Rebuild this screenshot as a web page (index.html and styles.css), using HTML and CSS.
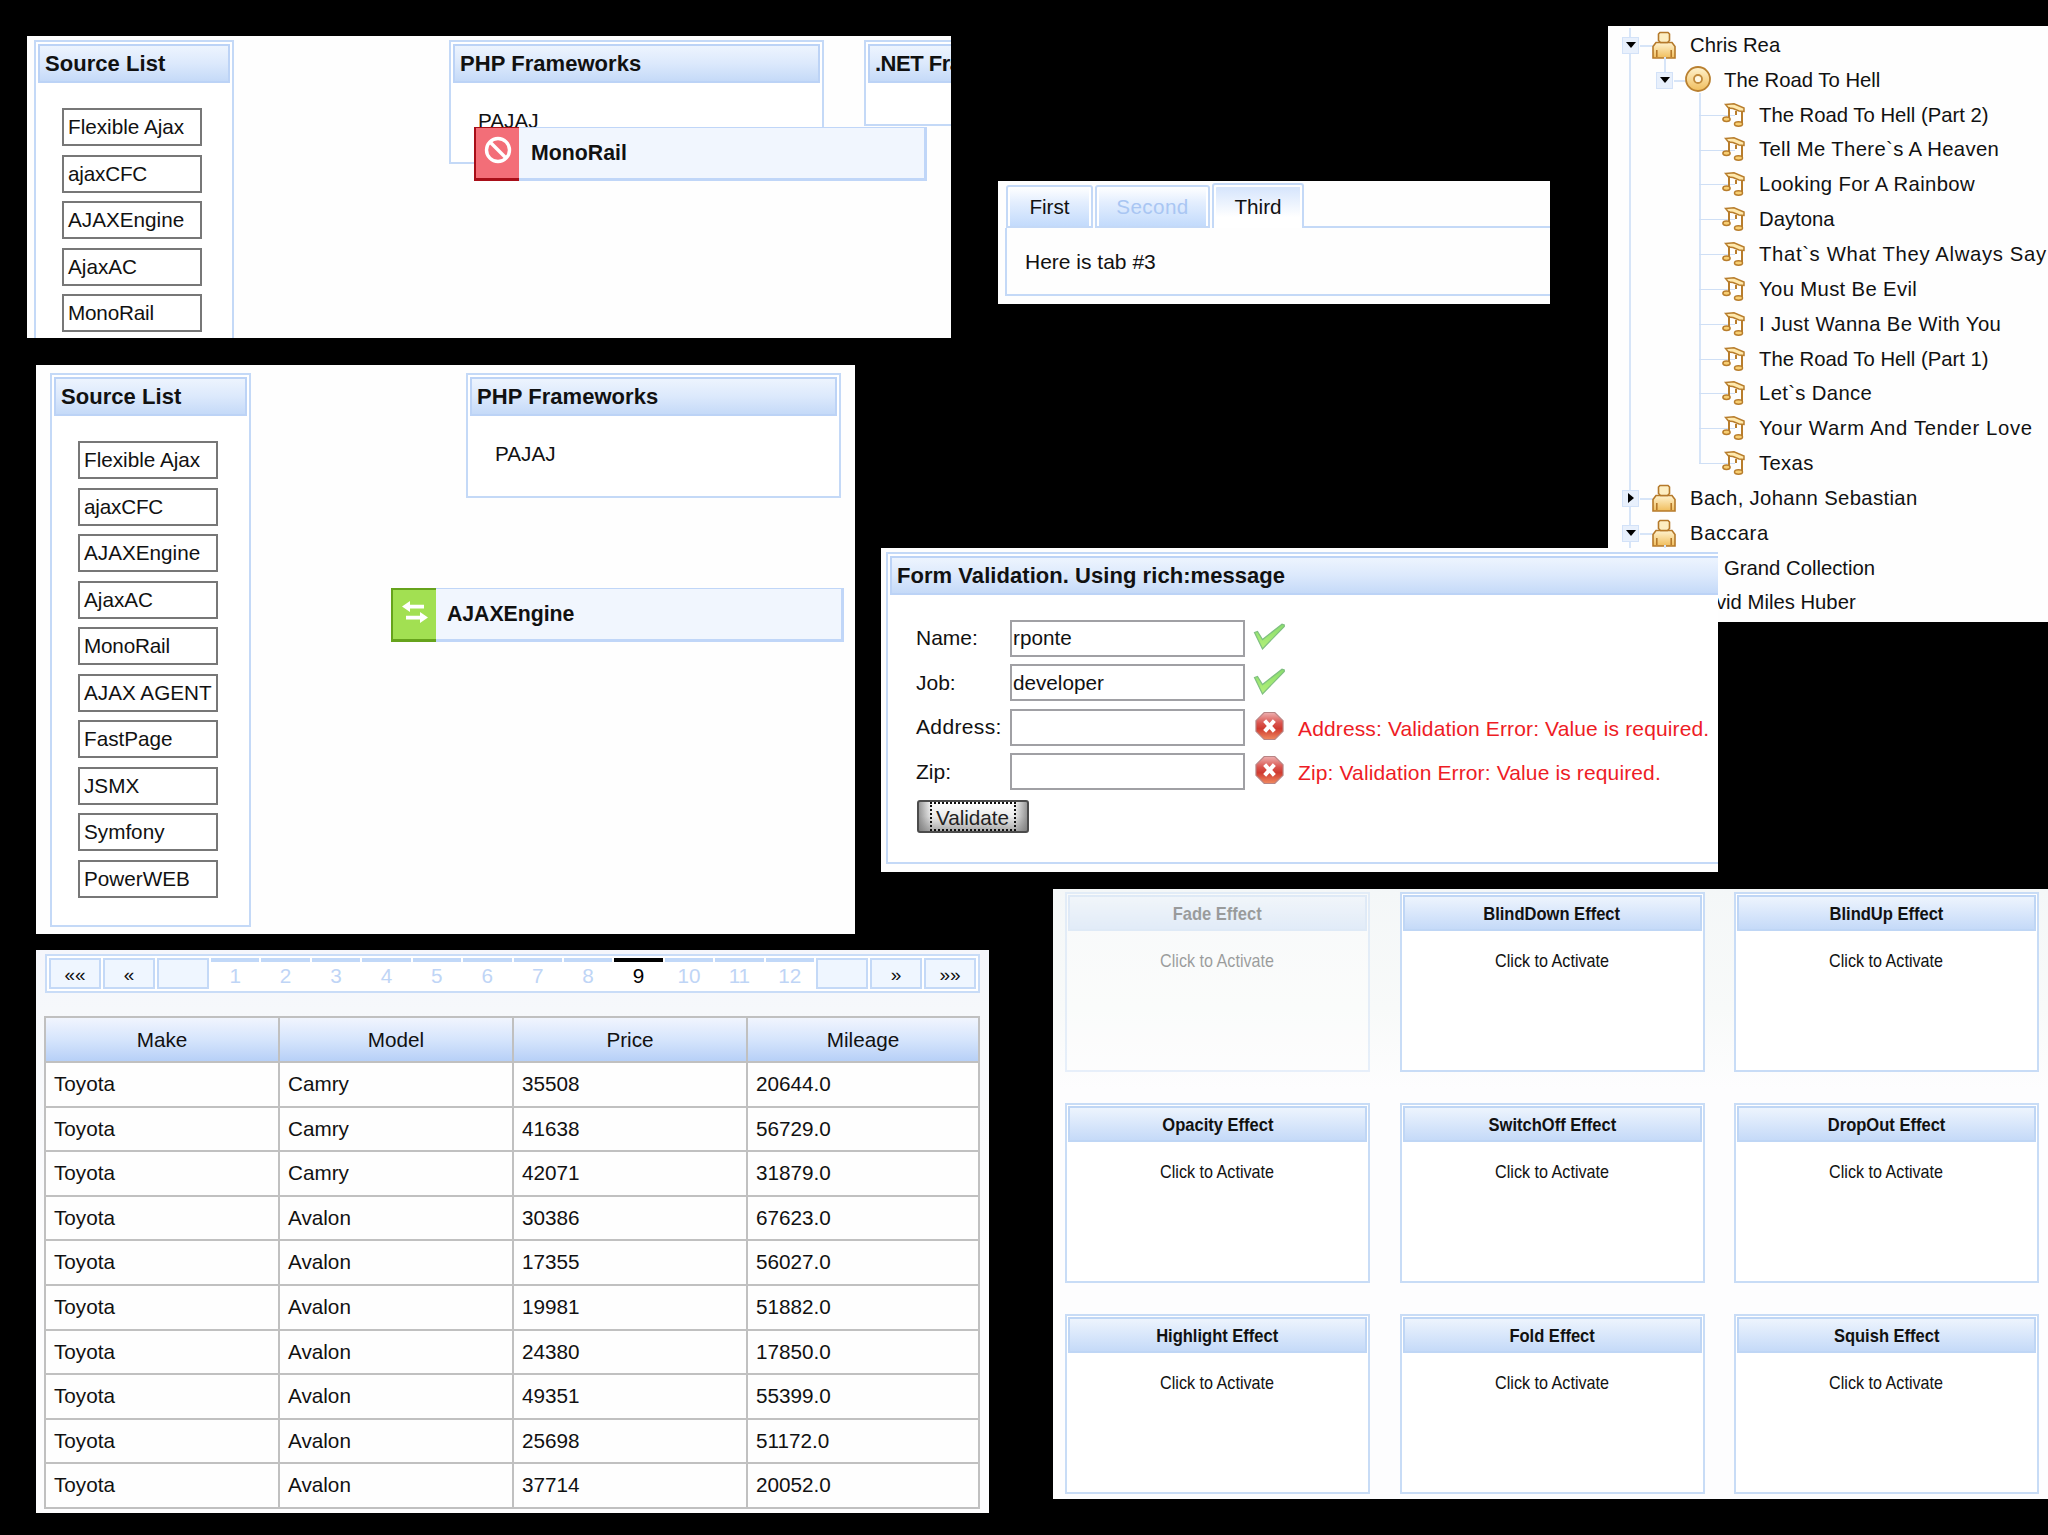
FILE: index.html
```html
<!DOCTYPE html>
<html lang="en">
<head>
<meta charset="UTF-8" />
<meta name="viewport" content="width=device-width, initial-scale=1" />
<title>RichFaces components</title>
<link rel="stylesheet" href="styles.css">
</head>
<body>

<!-- Icons -->
<svg class="defs" width="0" height="0">
<defs>
<linearGradient id="gold" x1="0" y1="0" x2="0" y2="1"><stop offset="0" stop-color="#fff3cf"/><stop offset="1" stop-color="#f0bd5c"/></linearGradient>
<linearGradient id="green" x1="0" y1="0" x2="0" y2="1"><stop offset="0" stop-color="#8ade6c"/><stop offset="1" stop-color="#b4f07a"/></linearGradient>
<linearGradient id="red" x1="0" y1="0" x2="0" y2="1"><stop offset="0" stop-color="#eeb0b0"/><stop offset=".4" stop-color="#d9534d"/><stop offset=".6" stop-color="#cf3a30"/><stop offset="1" stop-color="#f08a60"/></linearGradient>
<symbol id="person" viewBox="0 0 24 28">
<path d="M4 11.500h16l3 4v11.500H1v-11.500z" fill="url(#gold)" stroke="#b5792a" stroke-width="1.600"/>
<path d="M8 1.500h8l1.500 1.500v6.500l-2 2h-7l-2-2V3z" fill="#fdeec2" stroke="#b5792a" stroke-width="1.600"/>
<path d="M4.800 19v7M19.200 19v7" stroke="#b5792a" stroke-width="1.600"/>
</symbol>
<symbol id="disc" viewBox="0 0 26 26">
<circle cx="13" cy="13" r="12" fill="url(#gold)" stroke="#b98030" stroke-width="1.800"/>
<circle cx="13" cy="13" r="4" fill="#fff8e4" stroke="#c08a3c" stroke-width="1.800"/>
</symbol>
<symbol id="note" viewBox="0 0 24 25">
<path d="M3.500 2.500L12 1.800L22 6v3.500L17 9L11 6.500L6.500 6z" fill="#ffe9ad" stroke="#b87d2c" stroke-width="1.500"/>
<path d="M7 5v12M20 9v13M14 9v4" stroke="#b87d2c" stroke-width="2"/>
<ellipse cx="4.500" cy="17.300" rx="3.600" ry="2.200" fill="#f8cf73" stroke="#b87d2c" stroke-width="1.500"/>
<ellipse cx="16.500" cy="22" rx="4" ry="2.200" fill="#f8cf73" stroke="#b87d2c" stroke-width="1.500"/>
</symbol>
<symbol id="check" viewBox="0 0 32 27">
<path d="M1.500 9.500l3-1 5 8L29 1.200l2.300.8v1.500L9.500 26z" fill="url(#green)" stroke="#7fbf80" stroke-width="1.200"/>
</symbol>
<symbol id="error" viewBox="0 0 30 30">
<path d="M9.500 1h11L29 9.500v11L20.500 29h-11L1 20.500v-11z" fill="url(#red)" stroke="#b88484" stroke-width="1.200"/>
<path d="M10 9.500l10 11M20 9.500l-10 11" stroke="#fff" stroke-width="4.200"/>
</symbol>
</defs>
</svg>

<!-- Drag and drop, rejected -->
<div class="shot shot-reject">
<div class="panel source">
<div class="panel-header">Source List</div>
<div class="items">
<div class="item">Flexible Ajax</div>
<div class="item narrow">ajaxCFC</div>
<div class="item">AJAXEngine</div>
<div class="item">AjaxAC</div>
<div class="item narrow">MonoRail</div>
</div>
</div>
<div class="panel php">
<div class="panel-header">PHP Frameworks</div>
<div class="dropped">PAJAJ</div>
</div>
<div class="panel net">
<div class="panel-header">.NET Frameworks</div>
</div>
<div class="drag reject">
<div class="drag-icon"><svg width="28" height="28" viewBox="0 0 28 28" fill="none" stroke="#fff" stroke-width="3.400"><circle cx="14" cy="14" r="11.500"/><path d="M6 6l16 16"/></svg></div>
<div class="drag-text">MonoRail</div>
</div>
</div>

<!-- Drag and drop, default -->
<div class="shot shot-drag">
<div class="panel source">
<div class="panel-header">Source List</div>
<div class="items">
<div class="item">Flexible Ajax</div>
<div class="item narrow">ajaxCFC</div>
<div class="item">AJAXEngine</div>
<div class="item">AjaxAC</div>
<div class="item narrow">MonoRail</div>
<div class="item">AJAX AGENT</div>
<div class="item">FastPage</div>
<div class="item">JSMX</div>
<div class="item">Symfony</div>
<div class="item">PowerWEB</div>
</div>
</div>
<div class="panel php">
<div class="panel-header">PHP Frameworks</div>
<div class="dropped">PAJAJ</div>
</div>
<div class="drag accept">
<div class="drag-icon"><svg width="28" height="24" viewBox="0 0 28 24" fill="#fff"><path d="M1 6.500L9 1v3.800h14v3.600H9V12z"/><path d="M27 17.500L19 12v3.800H5v3.600h14V23z"/></svg></div>
<div class="drag-text">AJAXEngine</div>
</div>
</div>

<!-- Tab panel -->
<div class="shot shot-tabs">
<div class="tabs">
<div class="tab first">First</div>
<div class="tab second">Second</div>
<div class="tab third">Third</div>
</div>
<div class="tab-body">Here is tab #3</div>
</div>

<!-- Tree -->
<div class="shot shot-tree">
<ul class="tree">
<li class="artist open"><div class="node"><i class="toggle"></i><svg class="person"><use href="#person"/></svg><span>Chris Rea</span></div>
<ul>
<li class="album open"><div class="node"><i class="toggle"></i><svg class="disc"><use href="#disc"/></svg><span>The Road To Hell</span></div>
<ul class="songs">
<li><svg class="note"><use href="#note"/></svg><span>The Road To Hell (Part 2)</span></li>
<li class="loose"><svg class="note"><use href="#note"/></svg><span>Tell Me There`s A Heaven</span></li>
<li class="loose"><svg class="note"><use href="#note"/></svg><span>Looking For A Rainbow</span></li>
<li><svg class="note"><use href="#note"/></svg><span>Daytona</span></li>
<li class="looser"><svg class="note"><use href="#note"/></svg><span>That`s What They Always Say</span></li>
<li class="loose"><svg class="note"><use href="#note"/></svg><span>You Must Be Evil</span></li>
<li class="loose"><svg class="note"><use href="#note"/></svg><span>I Just Wanna Be With You</span></li>
<li><svg class="note"><use href="#note"/></svg><span>The Road To Hell (Part 1)</span></li>
<li class="loose"><svg class="note"><use href="#note"/></svg><span>Let`s Dance</span></li>
<li class="looser"><svg class="note"><use href="#note"/></svg><span>Your Warm And Tender Love</span></li>
<li class="loose"><svg class="note"><use href="#note"/></svg><span>Texas</span></li>
</ul>
</li>
</ul>
</li>
<li class="artist loose"><div class="node"><i class="toggle closed"></i><svg class="person"><use href="#person"/></svg><span>Bach, Johann Sebastian</span></div></li>
<li class="artist"><div class="node looser"><i class="toggle"></i><svg class="person"><use href="#person"/></svg><span>Baccara</span></div>
<ul>
<li class="album"><div class="node"><i class="toggle closed"></i><svg class="disc"><use href="#disc"/></svg><span>Grand Collection</span></div></li>
</ul>
</li>
<li class="artist"><div class="node"><i class="toggle closed"></i><svg class="person"><use href="#person"/></svg><span>David Miles Huber</span></div></li>
</ul>
</div>

<!-- Form validation -->
<div class="shot shot-form">
<div class="panel form-panel">
<div class="panel-header">Form Validation. Using rich:message</div>
<form class="form">
<label for="name">Name:</label><input id="name" type="text" value="rponte"><svg class="check"><use href="#check"/></svg><span></span>
<label for="job">Job:</label><input id="job" type="text" value="developer"><svg class="check"><use href="#check"/></svg><span></span>
<label for="address" class="loose">Address:</label><input id="address" type="text"><svg class="error"><use href="#error"/></svg><span class="message">Address: Validation Error: Value is required.</span>
<label for="zip">Zip:</label><input id="zip" type="text"><svg class="error"><use href="#error"/></svg><span class="message">Zip: Validation Error: Value is required.</span>
</form>
<button class="validate" type="button"><span>Validate</span></button>
</div>
</div>

<!-- Data table -->
<div class="shot shot-table">
<div class="scroller">
<div class="step">««</div><div class="step">«</div><div class="step"></div>
<div class="pages">
<div>1</div><div>2</div><div>3</div><div>4</div><div>5</div><div>6</div><div>7</div><div>8</div><div class="current">9</div><div>10</div><div>11</div><div>12</div>
</div>
<div class="step"></div><div class="step">»</div><div class="step">»»</div>
</div>
<div class="cars">
<b>Make</b><b>Model</b><b>Price</b><b>Mileage</b>
<div>Toyota</div><div>Camry</div><div>35508</div><div>20644.0</div>
<div>Toyota</div><div>Camry</div><div>41638</div><div>56729.0</div>
<div>Toyota</div><div>Camry</div><div>42071</div><div>31879.0</div>
<div>Toyota</div><div>Avalon</div><div>30386</div><div>67623.0</div>
<div>Toyota</div><div>Avalon</div><div>17355</div><div>56027.0</div>
<div>Toyota</div><div>Avalon</div><div>19981</div><div>51882.0</div>
<div>Toyota</div><div>Avalon</div><div>24380</div><div>17850.0</div>
<div>Toyota</div><div>Avalon</div><div>49351</div><div>55399.0</div>
<div>Toyota</div><div>Avalon</div><div>25698</div><div>51172.0</div>
<div>Toyota</div><div>Avalon</div><div>37714</div><div>20052.0</div>
</div>
</div>

<!-- Effects -->
<div class="shot shot-effects">
<div class="effect faded"><h3><span>Fade Effect</span></h3><p><span>Click to Activate</span></p></div>
<div class="effect"><h3><span>BlindDown Effect</span></h3><p><span>Click to Activate</span></p></div>
<div class="effect"><h3><span>BlindUp Effect</span></h3><p><span>Click to Activate</span></p></div>
<div class="effect"><h3><span>Opacity Effect</span></h3><p><span>Click to Activate</span></p></div>
<div class="effect"><h3><span>SwitchOff Effect</span></h3><p><span>Click to Activate</span></p></div>
<div class="effect"><h3><span>DropOut Effect</span></h3><p><span>Click to Activate</span></p></div>
<div class="effect"><h3><span>Highlight Effect</span></h3><p><span>Click to Activate</span></p></div>
<div class="effect"><h3><span>Fold Effect</span></h3><p><span>Click to Activate</span></p></div>
<div class="effect"><h3><span>Squish Effect</span></h3><p><span>Click to Activate</span></p></div>
</div>

</body>
</html>
```
FILE: styles.css
```css
* {
  box-sizing: border-box;
}
body {
  margin: 0;
  width: 2048px;
  height: 1535px;
  position: relative;
  overflow: hidden;
  background: #000;
  color: #111;
  font-family: "Liberation Sans", Arial, sans-serif;
  font-size: 20.7px;
}
.defs {
  position: absolute;
}
ul {
  list-style: none;
  margin: 0;
  padding: 0;
}

/* Windows on the black canvas */
.shot {
  position: absolute;
  overflow: hidden;
  background: #fefefe;
}
.shot-reject {
  left: 27px;
  top: 36px;
  width: 924px;
  height: 302px;
  display: flex;
  align-items: flex-start;
  padding: 4px 0 0 7px;
}
.shot-drag {
  left: 36px;
  top: 365px;
  width: 819px;
  height: 569px;
  display: flex;
  align-items: flex-start;
  padding: 8px 0 0 14px;
}
.shot-tabs {
  left: 998px;
  top: 181px;
  width: 552px;
  height: 123px;
  padding: 2px 0 0 7px;
}
.shot-tree {
  left: 1608px;
  top: 26px;
  width: 440px;
  height: 596px;
  padding-top: 2px;
}
.shot-form {
  left: 881px;
  top: 548px;
  width: 837px;
  height: 324px;
  padding: 4px 0 0 5px;
}
.shot-table {
  left: 36px;
  top: 950px;
  width: 953px;
  height: 563px;
  padding: 4px 8px 0;
  background: linear-gradient(#f5f6fb, #f6f8fb 60px, #fdfdfe 300px);
}
.shot-effects {
  left: 1053px;
  top: 889px;
  width: 995px;
  height: 610px;
  padding: 3px 0 0 12px;
  background: linear-gradient(#f4f7f8, #f8faf9 120px, #fdfdfe 200px);
  display: grid;
  grid-template-columns: repeat(3, 305px);
  grid-auto-rows: 180px;
  column-gap: 29.5px;
  row-gap: 31px;
}

/* Panels */
.panel {
  flex: none;
  border: 2px solid #c4d9f7;
  padding: 2px;
  background: #fff;
}
.panel-header {
  height: 39px;
  line-height: 35px;
  border: 2px solid #bcd3f6;
  padding-left: 5px;
  background: linear-gradient(#edf4fe, #dce9fc 50%, #c5daf8);
  font-size: 22px;
  font-weight: bold;
  letter-spacing: .05px;
  white-space: nowrap;
}
.source {
  width: 201px;
  height: 554px;
}
.shot-reject .source {
  width: 200px;
}
.items {
  display: flex;
  flex-direction: column;
  gap: 8.5px;
  padding: 25px 0 0 24px;
}
.item {
  width: 140px;
  height: 38px;
  line-height: 34px;
  border: 2px solid #777;
  padding-left: 4px;
  white-space: nowrap;
}
.item.narrow {
  letter-spacing: -.2px;
}
.php {
  width: 375px;
  height: 124px;
  margin-left: 215px;
}
.shot-drag .php {
  height: 125px;
}
.net {
  width: 300px;
  height: 86px;
  margin-left: 40px;
}
.net .panel-header {
  letter-spacing: -.5px;
}
.dropped {
  padding: 26px 0 0 25px;
  line-height: 24px;
  font-size: 20.7px;
}

/* Drag indicator */
.drag {
  position: absolute;
  width: 453px;
  height: 54px;
  display: flex;
  font-size: 21.3px;
  font-weight: bold;
}
.reject {
  left: 447px;
  top: 91px;
}
.accept {
  left: 355px;
  top: 223px;
}
.drag-icon {
  width: 45px;
  padding: 8px 0 0 8px;
}
.reject .drag-icon {
  background: #f36e78;
  border: 1px solid #a80e18;
  border-width: 1px 0 3px 2px;
}
.accept .drag-icon {
  background: #a2e052;
  border: 2px solid #66a31c;
  border-width: 2px 0 3px 2px;
  padding-top: 10px;
}
.drag-text {
  flex: 1;
  padding-left: 12px;
  line-height: 51px;
  background: #f1f6fe;
  border: 2px solid #c0d6f8;
  border-width: 1px 3px 3px 0;
}
.accept .drag-text {
  padding-left: 11px;
  letter-spacing: -.05px;
}

/* Tabs */
.tabs {
  display: flex;
  align-items: flex-end;
  height: 45px;
  gap: 2px;
  position: relative;
  padding-left: 1px;
}
.tabs::after {
  content: "";
  flex: 1;
  border-bottom: 2px solid #c4d9f7;
  margin-left: -2px;
}
.tab {
  height: 43px;
  line-height: 40px;
  border: 2px solid #c4d9f7;
  border-radius: 3px 3px 0 0;
  text-align: center;
  background: linear-gradient(#fff, #e3eefe 40%, #c3dbfc);
  box-shadow: inset 2px 0 #fff, inset -2px 0 #fff;
}
.first {
  width: 87px;
}
.second {
  width: 115px;
  color: #a9c6f3;
  letter-spacing: .4px;
}
.third {
  width: 92px;
  height: 45px;
  line-height: 43px;
  border-bottom: 0;
  background: linear-gradient(#d3e3fc, #fff 75%);
  box-shadow: inset 2px 2px #fff, inset -2px 0 #fff;
}
.tab-body {
  height: 68px;
  border: 2px solid #c4d9f7;
  border-width: 0 0 2px 2px;
  padding-left: 18px;
  line-height: 68px;
  font-size: 21px;
}

/* Tree */
.tree {
  font-size: 20.3px;
  white-space: nowrap;
}
.loose {
  letter-spacing: .35px;
}
.looser {
  letter-spacing: .65px;
}
.node,
.songs li {
  height: 34.850px;
  display: flex;
  align-items: center;
  position: relative;
}
.artist {
  position: relative;
}
.artist > .node {
  padding-left: 14px;
}
.artist::before {
  content: "";
  position: absolute;
  left: 21px;
  top: 0;
  bottom: 0;
  border-left: 2px solid #d7e5f8;
}
.album > .node {
  padding-left: 48px;
}
.album {
  position: relative;
}
.album::before {
  content: "";
  position: absolute;
  left: 56px;
  top: -6px;
  height: 16px;
  border-left: 2px solid #d7e5f8;
}
.toggle {
  width: 17px;
  height: 17px;
  background: #e8f0fc;
  border: 1px solid #d3e2f8;
  display: flex;
  align-items: center;
  justify-content: center;
  position: relative;
}
.toggle::before {
  content: "";
  border: 5px solid transparent;
  border-top: 6px solid #000;
  border-bottom: 0;
}
.toggle.closed::before {
  border: 5px solid transparent;
  border-left: 6px solid #000;
  border-right: 0;
}
/* dash between toggle and icon */
.toggle::after {
  content: "";
  position: absolute;
  left: 17px;
  top: 7px;
  width: 13px;
  height: 2px;
  background: #d7e5f8;
}
.person {
  width: 24px;
  height: 28px;
  margin: 0 14px 0 13px;
  position: relative;
}
.disc {
  width: 26px;
  height: 26px;
  margin: -3px 13px 0 12px;
  position: relative;
}
.songs {
  margin-left: 91px;
}
.songs li::before {
  content: "";
  position: absolute;
  left: 0;
  top: 0;
  height: 35px;
  border-left: 2px solid #d7e5f8;
}
.songs li:first-child::before {
  top: -5px;
  height: 40px;
}
.songs li:last-child::before {
  height: 18px;
}
.songs li::after {
  content: "";
  position: absolute;
  left: 0;
  top: 17px;
  width: 36px;
  height: 1px;
  background: #cfdff5;
}
.note {
  width: 24px;
  height: 25px;
  margin: -2px 13px 0 23px;
  position: relative;
  z-index: 1;
}

/* Form */
.form-panel {
  width: 1000px;
  height: 312px;
}
.form {
  display: grid;
  grid-template-columns: 94px 235px 40px auto;
  grid-auto-rows: 36.500px;
  row-gap: 8px;
  align-items: center;
  padding: 25px 0 0 26px;
  font-size: 21px;
}
.form input {
  width: 235px;
  height: 37px;
  border: 2px solid #a0a0a4;
  padding: 0 1px;
  font: inherit;
  font-size: 20.7px;
  color: #111;
  background: #fff;
}
.check {
  width: 32px;
  height: 27px;
  margin: -3px 0 0 8px;
}
.error {
  width: 29px;
  height: 30px;
  margin: -3px 0 0 10px;
}
.message {
  color: #ee1c25;
  padding: 3px 0 0 13px;
  letter-spacing: .13px;
  white-space: nowrap;
}
.validate {
  display: block;
  width: 112px;
  height: 33px;
  margin: 10px 0 0 27px;
  padding: 0 11px;
  border: 2px solid #4c4c4c;
  border-radius: 3px;
  background: linear-gradient(90deg, rgba(110,110,110,.7), transparent 12%, transparent 88%, rgba(110,110,110,.7)), linear-gradient(#fff, #ececec 50%, #a9a9a9);
  font: 20.7px "Liberation Sans", Arial, sans-serif;
  color: #222;
}
.validate span {
  display: block;
  height: 29px;
  line-height: 27px;
  border: 2px dotted #111;
  text-indent: -1px;
}

/* Scroller and table */
.scroller {
  height: 39px;
  display: flex;
  gap: 2px;
  padding: 2px;
  border: 2px solid #c9dcf7;
  background: #fff;
  width: 935px;
  margin-left: 1px;
}
.step {
  width: 52px;
  height: 31px;
  line-height: 30px;
  border: 2px solid #c4d9f7;
  background: #eff6ff;
  text-align: center;
  font-size: 19px;
}
.pages {
  flex: 1;
  display: grid;
  grid-template-columns: repeat(12, 1fr);
  gap: 2px;
  color: #bfd5f6;
}
.pages div {
  height: 31px;
  line-height: 27px;
  border-top: 4px solid #c1d8f8;
  text-align: center;
}
.pages .current {
  color: #000;
  border-top-color: #000;
}
.cars {
  width: 936px;
  height: 493px;
  margin-top: 23px;
  padding: 2px;
  background: #c0c0c0;
  display: grid;
  grid-template-columns: 232px 232px 232px 1fr;
  grid-template-rows: 43px;
  grid-auto-rows: 1fr;
  gap: 2px;
}
.cars div {
  padding-left: 8px;
  line-height: 42px;
  background: #fefefe;
}
.cars b {
  font-weight: normal;
  text-align: center;
  line-height: 43px;
  background: linear-gradient(#f1f5fe, #d6e5fc 50%, #b7d0f7);
}

/* Effects */
.effect {
  border: 2px solid #c8dcf6;
  padding: 1px;
  background: #fff;
  text-align: center;
  font-size: 19px;
}
.effect h3 {
  margin: 0;
  height: 36px;
  line-height: 33px;
  border: 2px solid #bfd6f5;
  background: linear-gradient(#edf4fd, #d9e7fb 50%, #c5daf8);
  font-size: 19px;
}
.effect p {
  margin: 17px 0 0;
  line-height: 25px;
}
.effect span {
  display: inline-block;
  transform: scaleX(.85);
}
.effect h3 span {
  transform: scaleX(.87);
}
.faded {
  opacity: .4;
}
```
